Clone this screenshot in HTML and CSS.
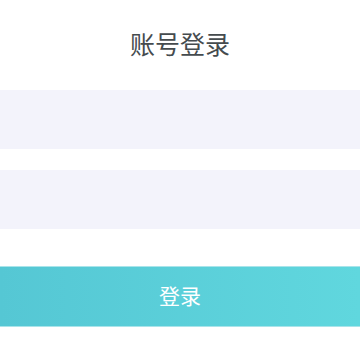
FILE: index.html
```html
<!DOCTYPE html>
<html lang="zh">
<head>
    <meta charset="UTF-8">
    <meta name="viewport" content="width=device-width, initial-scale=1.0">
    <title>账号登录</title>
    <link rel="stylesheet" href="styles.css">
</head>
<body>
    <div class="login">
        <h1 class="title">账号登录</h1>
        <div class="field"><input type="text" class="input"></div>
        <div class="field"><input type="password" class="input"></div>
        <button class="btn">登录</button>
    </div>
</body>
</html>
```

FILE: styles.css
```css
* {
    margin: 0;
    padding: 0;
    box-sizing: border-box;
}

body {
    font-family: "Noto Sans CJK SC", "Noto Sans", sans-serif;
    background-color: #fff;
}

.login {
    display: flex;
    flex-direction: column;
}

.title {
    height: 90px;
    line-height: 86px;
    text-align: center;
    font-size: 25px;
    font-weight: 400;
    color: #454b4e;
}

.field {
    margin-bottom: 21px;
}

.input {
    display: block;
    width: 100%;
    height: 59px;
    border: none;
    outline: none;
    background-color: #f3f3fb;
}

.btn {
    margin-top: 16px;
    height: 61px;
    padding-bottom: 3px;
    border: none;
    border-top: 1px solid #a9e4ea;
    border-bottom: 1px solid #a9e4ea;
    background: linear-gradient(90deg, #55c7d4, #60d7de);
    color: #fff;
    font-family: inherit;
    font-size: 21px;
}
```
